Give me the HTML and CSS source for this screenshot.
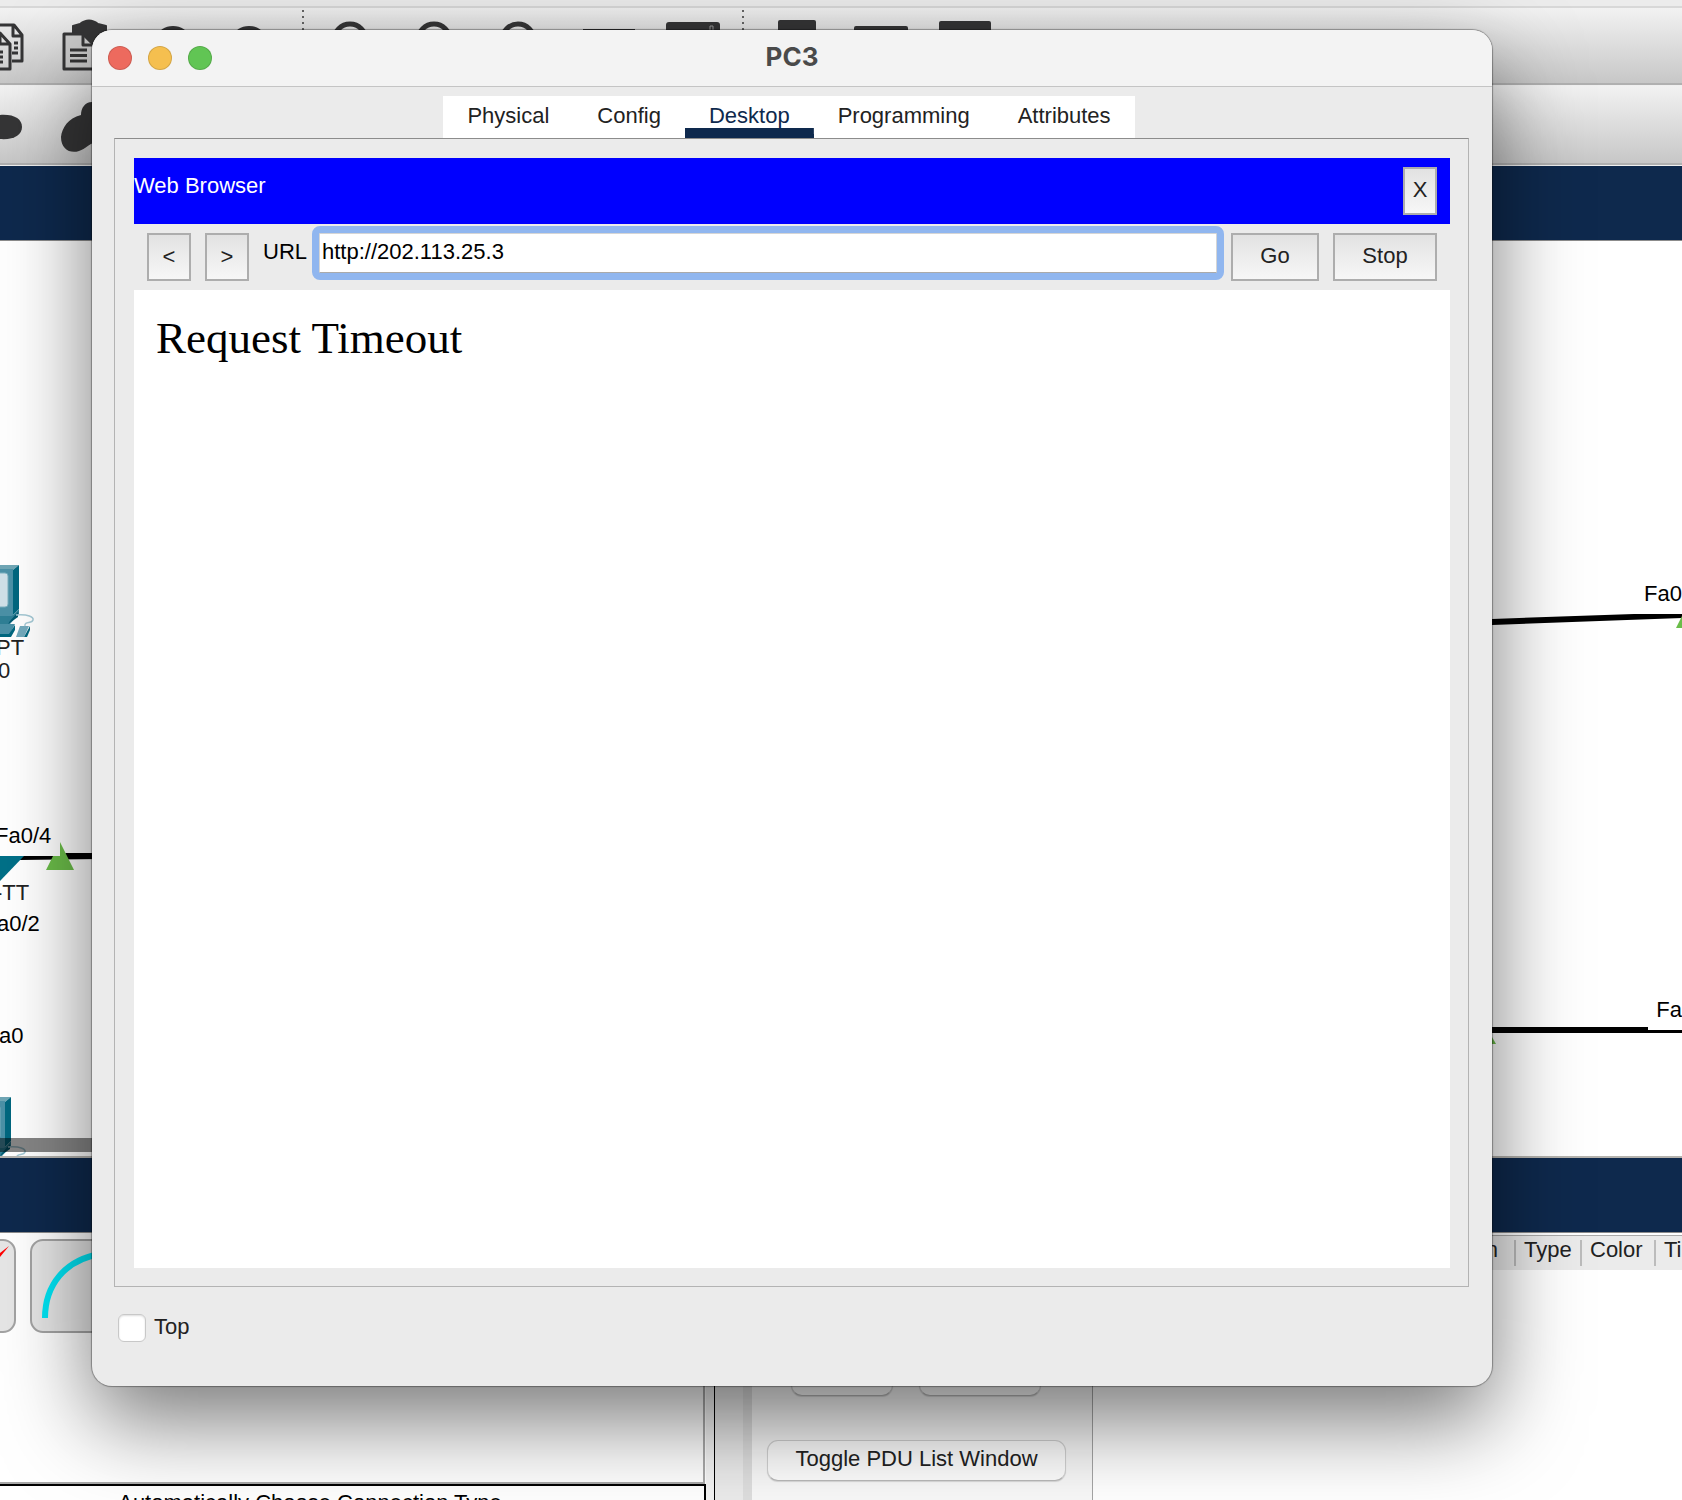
FILE: index.html
```html
<!DOCTYPE html>
<html lang="en">
<head>
<meta charset="utf-8">
<title>PC3</title>
<link rel="stylesheet" href="styles.css">
</head>
<body>
<div class="workspace">
  <div class="menu-edge"></div>
  <div class="toolbar main-tools">
    <svg class="toolbar-icons" width="1000" height="75" viewBox="0 8 1000 75" fill="none" stroke="#353536" stroke-width="3" stroke-linejoin="round" aria-hidden="true">
      <path d="M-8 25H14L22 35V61H12M13 25V36H22M14 43H18M14 48H18M12 53H18"/>
      <path d="M-8 33H0L10 44V69H-8M0 33V44H10M-4 52H3M-4 57H3M-4 62H3"/>
      <path d="M73 33V26L80 24Q89 17 98 24L106 26V48H90L80 33Z" fill="#353536" stroke-width="2"/>
      <path d="M64 34H83L94 45V69H64Z" fill="#ccc"/>
      <path d="M83 34V45H94M70 50H87M70 55.500H87M70 61H87"/>
      <g fill="#353536" stroke="none">
        <ellipse cx="173" cy="36" rx="15" ry="10"/><ellipse cx="249" cy="36" rx="15" ry="10"/>
        <rect x="583" y="29" width="52" height="30"/>
        <rect x="666" y="22" width="54" height="40" rx="3"/>
        <rect x="778" y="20" width="38" height="40" rx="2"/>
        <rect x="854" y="26" width="54" height="40" rx="2"/>
        <rect x="939" y="21" width="52" height="40" rx="2"/>
      </g>
      <g stroke-width="5"><circle cx="350" cy="40" r="16"/><circle cx="434" cy="40" r="16"/><circle cx="518" cy="40" r="16"/></g>
      <path d="M710 30V26H713V30" stroke="#999" stroke-width="1"/>
      <path d="M303 10V34M743 10V34" stroke="#666" stroke-width="2" stroke-dasharray="2 4"/>
    </svg>
  </div>
  <div class="toolbar draw-tools">
    <svg class="toolbar-icons" width="200" height="76" viewBox="0 86 200 76" fill="#353536" aria-hidden="true">
      <path d="M0 115C14 114 22 119 22 127S14 140 0 139Z"/>
      <path d="M92 102C85 102 81 108 81 115C68 118 62 128 61 137C61 149 70 154 79 151C86 149 88 144 96 142V102Z"/>
    </svg>
  </div>
  <div class="navy-bar"></div>

  <main class="canvas">
    <svg class="canvas-left" width="100" height="916" viewBox="0 241 100 916" aria-hidden="true">
      <defs>
        <g id="pc">
          <path d="M0 565H19L13 570H0Z" fill="#70a7b6"/>
          <path d="M0 569H13V616H0Z" fill="#4b91a7"/>
          <path d="M13 570L19 565V609L13 615Z" fill="#00677f"/>
          <rect x="-12" y="573" width="20" height="34" rx="3" fill="#cfe0e8" stroke="#7bb0c0"/>
          <path d="M0 616H12L19 609V614L10 624H0Z" fill="#2f7f96"/>
          <path d="M10 621L18 612V617L8 624Z" fill="#00596f"/>
          <path d="M0 624H15L9 636H0Z" fill="#4b91a7"/>
          <path d="M15 625V630L11 637H0V634H9Z" fill="#00677f"/>
          <path d="M20 626H29L24 637H16Z" fill="#73aabd"/>
          <path d="M30 626V630L27 637H24Z" fill="#00677f"/>
          <path d="M16 615C28 614 34 617 33 620C32 624 24 621 25 626" fill="none" stroke="#a5c9d5" stroke-width="1.500"/>
        </g>
      </defs>
      <use href="#pc"/>
      <use href="#pc" transform="translate(-8 532)"/>
      <path d="M0 1138H92V1152H0Z" fill="#000" fill-opacity=".48"/>
      <path d="M20 856H60L66 853H100V859L20 860Z"/>
      <path d="M60 842L74 870H46L53 856H60Z" fill="#6bbd49"/>
      <path d="M0 856H24L0 881Z" fill="#007088"/>
    </svg>
    <svg class="canvas-right" width="190" height="916" viewBox="1492 241 190 916" aria-hidden="true">
      <path d="M1492 619L1634 614H1682V618L1492 625Z"/>
      <path d="M1676 628L1682 616V628Z" fill="#6bbd49"/>
      <path d="M1492 1027H1648V1030H1682V1033H1492Z"/>
      <path d="M1492 1037L1496 1044H1492Z" fill="#6bbd49"/>
    </svg>
    <span class="node-label pc-model">PT</span>
    <span class="node-label pc-name">0</span>
    <span class="node-label port-four">Fa0/4</span>
    <span class="node-label switch-model">-TT</span>
    <span class="node-label port-two">a0/2</span>
    <span class="node-label port-zero">a0</span>
    <span class="node-label port-upper">Fa0</span>
    <span class="node-label port-lower">Fa</span>
  </main>

  <div class="navy-bar"></div>
  <section class="dock">
    <div class="devices">
      <div class="cable-list">
        <div class="cables">
          <button class="cable" type="button" aria-label="Automatic connection">
            <svg width="88" height="90" viewBox="-74 1241 88 90" aria-hidden="true"><path d="M9 1246L0 1257L-30 1290L-10 1261Z" fill="#f00"/></svg>
          </button>
          <button class="cable" type="button" aria-label="Console">
            <svg width="88" height="90" viewBox="32 1241 88 90" aria-hidden="true"><path d="M45 1318C45 1285 65 1260 100 1254" fill="none" stroke="#00e5f5" stroke-width="6"/></svg>
          </button>
        </div>
      </div>
      <div class="cable-name">Automatically Choose Connection Type</div>
    </div>
    <div class="splitter"></div>
    <div class="scenario">
      <div class="scenario-row">
        <button class="soft new" type="button" aria-label="New"></button>
        <button class="soft delete" type="button" aria-label="Delete"></button>
      </div>
      <button class="soft toggle" type="button">Toggle PDU List Window</button>
    </div>
    <div class="pdu">
      <table class="pdu-table">
        <tr><th class="destination">n</th><th class="type">Type</th><th class="color">Color</th><th class="time">Ti</th></tr>
      </table>
    </div>
  </section>
</div>

<section class="window">
  <header class="titlebar">
    <div class="lights">
      <button class="light red" type="button" aria-label="Close"></button>
      <button class="light yellow" type="button" aria-label="Minimize"></button>
      <button class="light green" type="button" aria-label="Zoom"></button>
    </div>
    <h1 class="title">PC3</h1>
  </header>
  <nav class="tabs">
    <button class="tab" type="button">Physical</button>
    <button class="tab" type="button">Config</button>
    <button class="tab selected" type="button">Desktop</button>
    <button class="tab" type="button">Programming</button>
    <button class="tab" type="button">Attributes</button>
  </nav>
  <div class="frame">
    <div class="browser-head">
      <span class="browser-title">Web Browser</span>
      <button class="flat close" type="button">X</button>
    </div>
    <form class="address">
      <button class="flat step" type="button">&lt;</button>
      <button class="flat step" type="button">&gt;</button>
      <div class="url-field">
        <label class="url-label" for="url">URL</label>
        <input class="url" id="url" type="text" value="http://202.113.25.3">
      </div>
      <button class="flat go" type="button">Go</button>
      <button class="flat stop" type="button">Stop</button>
    </form>
    <div class="page">Request Timeout</div>
  </div>
  <footer class="footer">
    <input class="check" id="top" type="checkbox">
    <label for="top">Top</label>
  </footer>
</section>
</body>
</html>
```
FILE: styles.css
```css
* {
  box-sizing: border-box;
}

body {
  margin: 0;
  height: 100vh;
  position: relative;
  overflow: hidden;
  background: #fff;
  color: #222;
  font: 22px/26px "Liberation Sans", Arial, sans-serif;
}

button,
input {
  font: inherit;
  color: inherit;
  margin: 0;
}

/* Main application behind the device window */
.workspace {
  height: 100%;
  display: flex;
  flex-direction: column;
}

.menu-edge {
  height: 8px;
  flex: none;
  background: #ececec;
  border-bottom: 2px solid #d8d8d8;
}

.toolbar {
  flex: none;
  overflow: hidden;
  background: linear-gradient(#f2f2f2, #c6c6c6);
  border-bottom: 1px solid #f0f0f0;
  box-shadow: inset 0 -2px #b0b0b0;
}

.main-tools { height: 78px; }
.draw-tools { height: 80px; }

.toolbar-icons {
  display: block;
}

.navy-bar {
  height: 75px;
  flex: none;
  background: #0e294d;
  border-bottom: 1px solid #8c8c8c;
}

.canvas {
  flex: 1;
  min-height: 0;
  position: relative;
  overflow: hidden;
  border-bottom: 2px solid #b5b3ae;
}

.canvas-left,
.canvas-right {
  position: absolute;
  top: 0;
}

.canvas-left {
  left: 0;
}

.canvas-right {
  right: 0;
}

.node-label {
  position: absolute;
  color: #000;
  white-space: nowrap;
}

.pc-model { left: -4px; top: 394px; color: #222; }
.pc-name { left: -2px; top: 417px; color: #222; }
.port-four { left: -5px; top: 582px; }
.switch-model { left: -5px; top: 639px; color: #222; }
.port-two { left: -3px; top: 670px; }
.port-zero { left: -1px; top: 782px; }
.port-upper { right: 0; top: 340px; }
.port-lower { right: 0; top: 756px; }

.dock {
  height: 267px;
  flex: none;
  display: flex;
  overflow: hidden;
}

.devices {
  width: 792px;
  flex: none;
  margin-left: -86px;
  display: flex;
  flex-direction: column;
}

.cable-list {
  height: 251px;
  flex: none;
  padding: 6px 10px;
  margin-right: 1px;
  border-right: 2px solid #a9a9a9;
  border-bottom: 2px solid #a9a9a9;
}

.cables {
  display: flex;
  gap: 14px;
}

.cable {
  width: 92px;
  height: 94px;
  padding: 0;
  background: #e6e6e6;
  border: 2px solid #a3a3a3;
  border-radius: 13px;
}

.cable svg {
  display: block;
}

.cable-name {
  height: 56px;
  flex: none;
  padding-top: 4px;
  border: 2px solid #000;
  color: #000;
  text-align: center;
}

.splitter {
  width: 46px;
  flex: none;
  background: linear-gradient(to right, #f4f4f4 8px, #000 8px, #000 9px, #ebebeb 9px, #ebebeb 37px, #dedede 37px);
}

.scenario {
  width: 341px;
  flex: none;
  padding: 122px 26px 0 15px;
  background: #f8f8f8;
  border-right: 1px solid #a5a5a5;
}

.scenario-row {
  display: flex;
  gap: 26px;
  padding: 0 24px;
  margin-bottom: 44px;
}

.soft {
  height: 41px;
  padding: 0 0 4px;
  background: #fdfdfd;
  border: 1px solid #d2d2d2;
  border-bottom-color: #b9b9b9;
  border-radius: 11px;
  box-shadow: 0 1px 1px #0002;
}

.new { width: 102px; }
.delete { width: 122px; }
.toggle { width: 100%; }

.pdu {
  flex: 1;
  min-width: 0;
  padding-top: 2px;
  overflow: hidden;
}

.pdu-table {
  width: 100%;
  border-collapse: collapse;
  table-layout: fixed;
  background: #ebebeb;
  border-top: 1px solid #aaa;
}

.pdu-table th {
  height: 34px;
  padding: 0 0 6px 8px;
  font-weight: 400;
  text-align: left;
  background: linear-gradient(#bcbcbc, #bcbcbc) right 4px / 2px 26px no-repeat;
}

.pdu-table .destination {
  padding-right: 18px;
  text-align: right;
}

.pdu-table .type { width: 66px; }
.pdu-table .color { width: 74px; }
.pdu-table .time { width: 26px; background: none; }

/* Device window */
.window {
  position: absolute;
  inset: 30px 190px 114px 92px;
  display: flex;
  flex-direction: column;
  overflow: hidden;
  background: #ebebeb;
  border-radius: 20px;
  box-shadow: 0 0 1px 1px #0005, 0 34px 88px #0008;
}

.titlebar {
  height: 57px;
  flex: none;
  display: grid;
  grid-template-columns: 1fr auto 1fr;
  align-items: center;
  padding: 0 16px;
  background: #f3f3f3;
  border-bottom: 1px solid #c4c4c4;
}

.lights {
  display: flex;
  gap: 16px;
}

.light {
  width: 24px;
  height: 24px;
  padding: 0;
  border: 1px solid #0002;
  border-radius: 50%;
}

.red { background: #ed6a5e; }
.yellow { background: #f5bf4f; }
.green { background: #61c554; }

.title {
  margin: 0;
  padding-bottom: 2px;
  font: 700 26px/32px Inter, sans-serif;
  color: #4a4a4a;
}

.tabs {
  display: flex;
  align-self: center;
  margin: 9px 6px 0 0;
  background: #fff;
}

.tab {
  height: 42px;
  padding: 2px 24px 0;
  background: none;
  border: 0;
  border-bottom: 4px solid transparent;
}

.tab.selected {
  color: #0e294d;
  background: linear-gradient(#0e294d, #0e294d) bottom / 100% 6px no-repeat;
  border-bottom-color: #0e294d;
}

.frame {
  flex: 1;
  min-height: 0;
  margin: 0 23px 0 22px;
  padding: 19px 18px 18px 19px;
  display: flex;
  flex-direction: column;
  border: 1px solid #b3b3b3;
  border-top-color: #8c8c8c;
}

.browser-head {
  height: 66px;
  flex: none;
  display: flex;
  justify-content: space-between;
  align-items: flex-start;
  padding: 9px 13px 0 0;
  background: #00f;
  color: #fff;
}

.browser-title {
  padding-top: 6px;
}

.flat {
  height: 48px;
  padding: 0 0 3px;
  background: linear-gradient(#e2e2e2, #f7f7f7);
  border: 2px solid #adadad;
  color: #222;
}

.close { width: 34px; }
.step { width: 44px; padding: 0; }
.go { width: 88px; }
.stop { width: 104px; }

.address {
  height: 66px;
  flex: none;
  display: flex;
  align-items: flex-start;
  gap: 14px;
  padding: 9px 13px 0;
  color: #000;
}

.url-field {
  flex: 1;
  min-width: 0;
  display: flex;
  align-items: flex-start;
  gap: 12px;
}

.url-label {
  padding-top: 6px;
}

.url {
  flex: 1;
  min-width: 0;
  height: 40px;
  padding: 0 2px 2px;
  background: #fff;
  border: 1px solid #d5d5d5;
  border-bottom-color: #aaa;
  outline: 7px solid #90b6ef;
  border-radius: 1px;
}

.page {
  flex: 1;
  padding: 22px;
  background: #fff;
  color: #000;
  font: 45px/52px "Liberation Serif", "Times New Roman", serif;
}

.footer {
  height: 99px;
  flex: none;
  display: flex;
  align-items: flex-start;
  gap: 8px;
  padding: 27px 26px;
}

.check {
  appearance: none;
  width: 28px;
  height: 28px;
  background: #fff;
  border: 1px solid #c8c8c8;
  border-radius: 6px;
  box-shadow: inset 0 1px 2px #0002;
}
```
